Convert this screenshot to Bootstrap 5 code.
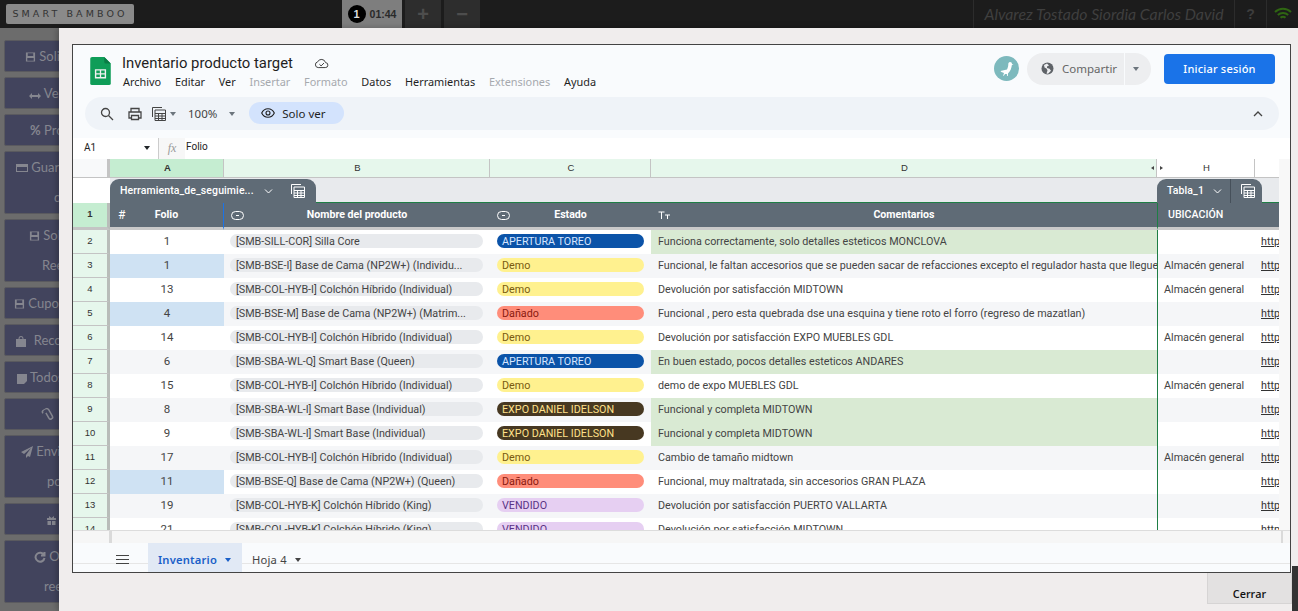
<!DOCTYPE html>
<html lang="es">
<head>
<meta charset="UTF-8">
<meta name="viewport" content="width=device-width, initial-scale=1">
<title>Inventario producto target</title>
<link href="https://cdn.jsdelivr.net/npm/bootstrap@5.3.0/dist/css/bootstrap.min.css" rel="stylesheet">
<style>
  html, body { height: 100%; overflow: hidden; }
  body { background: #6c6c6c; font-family: Roboto, "Liberation Sans", sans-serif; }

  /* top bar */
  .top-bar { height: 28px; background: #1c1c1c; }
  .brand-box { width: 128px; height: 20px; margin: 4px 0 0 6px; background: #8a8a8a; border-radius: 2px; color: #333; font: 400 9.5px/20px "DejaVu Sans", sans-serif; letter-spacing: 3.1px; white-space: nowrap; }
  .timer-box { width: 60px; margin-left: 208px; background: #7e7e7e; font: 700 10.5px "Liberation Sans", sans-serif; color: #2a2a2a; }
  .timer-num { width: 18px; height: 18px; border-radius: 50%; background: #000; color: #ddd; font-size: 11px; }
  .tool-box { width: 36px; margin-left: 3px; background: #2d2d2d; color: #4d4d4d; font: 700 20px/28px "Liberation Sans", sans-serif; }
  .user-name { width: 262px; border-left: 1px solid #2c2c2c; border-right: 1px solid #2c2c2c; margin-left: auto; color: #3f3f3f; font: italic 15.8px/28px Lato, sans-serif; white-space: nowrap; }
  .help-box { width: 32px; border-right: 1px solid #2c2c2c; color: #3d3d3d; font: 700 14px/28px "Liberation Sans", sans-serif; }
  .wifi-box { width: 31px; }

  /* dimmed side menu behind the modal */
  .side-menu { width: 130px; padding: 12px 0 0 4px; }
  .side-btn { height: 32px; margin-bottom: 5px; background: #42445d; border: 1px solid #5a5a5f; border-radius: 2px; color: #85868f; font: 13px/30px Lato, sans-serif; white-space: nowrap; overflow: hidden; }
  .side-btn.tall { height: 63px; }
  .side-btn svg { fill: #85868f; vertical-align: -2px; }
  .side-btn svg.line-ic { fill: none; stroke: #85868f; }
  .side-btn p { margin: 0; line-height: 30px; }
  .ind-9 { padding-left: 9px; } .ind-10 { padding-left: 10px; } .ind-11 { padding-left: 11px; }
  .ind-12 { padding-left: 12px; } .ind-16 { padding-left: 16px; } .ind-13 { padding-left: 13px; }
  .ind-20 { padding-left: 20px; } .ind-24 { padding-left: 24px; } .ind-25 { padding-left: 25px; }
  .ind-26 { padding-left: 26px; } .ind-29 { padding-left: 29px; } .ind-38 { padding-left: 38px; }
  .ind-41 { padding-left: 41px; }

  /* modal over the page */
  .sheet-modal { position: absolute; left: 59px; top: 28px; right: 0; bottom: 0; background: #f0eded; box-shadow: -2px 0 6px rgba(0,0,0,.25); }
  .sheet-frame { margin: 16px 7px 0 13px; height: 529px; border: 1px solid #444; background: #f9fbfd; overflow: hidden; }
  .close-wrap { width: 85px; height: 31px; margin: 0 6px 0 auto; background: #e3e1e1; border: 1px solid #d6d4d4; border-top: 0; color: #111; font: 600 10.8px/42px "Open Sans", sans-serif; text-align: center; }
  .scroll-thumb { position: absolute; right: 0; bottom: 0; width: 6px; height: 45px; background: #333; }

  /* sheets header */
  .doc-head { height: 52px; padding-left: 17px; }
  .doc-logo { margin-top: 12px; }
  .doc-text { margin-left: 11px; }
  .doc-title { font: 400 14.85px/20px Roboto, "Noto Sans", sans-serif; color: #1f1f1f; margin-top: 8px; }
  .cloud-ic { margin-left: 21px; }
  .doc-menu { font: 10.9px/16px "Noto Sans", Roboto, sans-serif; color: #1f1f1f; gap: 13.75px; margin-top: 1px; padding-left: 1px; }
  .doc-menu .off { color: #a6a9ae; }
  .head-right { margin-top: -5px; }
  .share-pill { width: 124px; height: 32px; background: #edeef0; border-radius: 16px; color: #666; font: 11.5px "Noto Sans", sans-serif; }
  .share-main { width: 98px; height: 32px; border-right: 1px solid #f9fbfd; padding-left: 14px; gap: 8px; }
  .login-btn { width: 111px; height: 30px; margin: 0 15px 0 13px; background: #1a73e8; border-radius: 4px; color: #fff; font: 500 11px/30px "Noto Sans", sans-serif; letter-spacing: .2px; text-align: center; }
  .goose { width: 25px; height: 25px; border-radius: 50%; background: #7db9bd; margin-right: 8px; }
  .tool-pill { height: 33px; margin: 0 11px 0 12px; background: #eff3f8; border-radius: 17px; padding-left: 15px; color: #333; }
  .print-ic { margin-left: 14px; }
  .calc-ic { margin-left: 10px; }
  .zoom-val { font: 11.5px "Noto Sans", sans-serif; color: #444; margin-left: 12px; }
  .zoom-tri { margin-left: 12px; }
  .view-pill { width: 95px; height: 22px; margin: 0 0 1px 14px; background: #d3e3fd; border-radius: 11px; color: #1f1f1f; font: 11.5px "Noto Sans", sans-serif; gap: 7px; padding-left: 12px; }
  .formula-bar { height: 21px; margin-top: 8px; background: #fff; font: 10px/18px Roboto, sans-serif; color: #222; }
  .name-box { width: 85px; height: 19px; padding-left: 11px; }
  .fx-box { width: 27px; height: 21px; background: #f7f7f7; color: #999; font: italic 12px/21px "Liberation Serif", serif; text-align: center; border-left: 1px solid #ccc; }
  .formula-val { padding-left: 1px; }

  /* grid */
  .sheet-grid { display: grid; grid-template-columns: 37px 114px 266px 161px 506px 98px 24px; width: 1206px; height: 371px; overflow: hidden; font-size: 10.75px; color: #444; align-content: start; }
  .col-head { height: 19px; padding-left: 2px; border-bottom: 1px solid #c4c4c4; border-right: 1px solid #c4c4c4; background: #e6f7ec; text-align: center; font: 9.5px/18px "Liberation Sans", sans-serif; color: #333; position: relative; }
  .col-head.corner { background: #f8f9fa; border-right: 3px solid #c4c4c4; }
  .col-head.active { background: #c5edd1; font-weight: 700; }
  .col-head.plain { background: #fff; }
  .mark-l, .mark-r { position: absolute; top: 7px; width: 0; height: 0; border-top: 2.5px solid transparent; border-bottom: 2.5px solid transparent; }
  .mark-l { right: 2px; border-right: 3px solid #444; }
  .mark-r { left: 3px; border-left: 3px solid #444; }
  .table-strip { height: 25px; padding-top: 1px; background: #e8eaed; border-bottom: 1px solid #1e7e45; }
  .table-strip.blank { background: #fff; border-bottom: 0; }
  .strip-main { grid-column: 2 / span 4; }
  .strip-end { grid-column: 6 / span 2; }
  .table-tab { height: 24px; background: #5f6b76; color: #fff; border-radius: 9px 9px 0 0; font: 500 10.5px/24px Roboto, sans-serif; letter-spacing: .1px; }
  .tab-wide { width: 206px; padding-left: 10px; }
  .tab-narrow { width: 105px; padding-left: 10px; }
  .chev-wide { margin-left: 10px; }
  .calc-wide { margin-left: 18px; }
  .chev-narrow { margin-left: 9px; }
  .tab-split { height: 24px; margin-left: 8px; padding-left: 10px; border-left: 1px solid #46505a; }
  .row-num { background: #e6f7ec; border-right: 3px solid #b8bdb9; border-bottom: 1px solid #c4c4c4; text-align: center; font: 9.5px/22px "Liberation Sans", sans-serif; color: #333; height: 24px; }
  .row-num.active { background: #c5edd1; font-weight: 700; height: 27px; border-bottom: 3px solid #c4c4c4; }
  .head-cell { height: 27px; background: #5f6b76; color: #fff; border-bottom: 3px solid #c9c9c9; font: 700 10.6px/24px Roboto, sans-serif; text-align: center; position: relative; }
  .head-cell svg { position: absolute; left: 7px; top: 8px; }
  .head-cell.left { text-align: left; padding-left: 10px; font-weight: 500; border-left: 1px solid #1e7e45; }
  .head-cell.sel { border-right: 1px solid #1a73e8; }
  .hash { position: absolute; left: 8px; font-weight: 400; font-size: 12px; }
  .data-cell { height: 24px; line-height: 24px; padding: 0 7px; white-space: nowrap; overflow: hidden; background: #fff; }
  .stripe { background: #f5f6f8; }
  .center { text-align: center; font-size: 11.5px; line-height: 22px; }
  .blue { background: #cfe2f3; }
  .green { background: #d9ead3; }
  .loc { border-left: 1px solid #1e7e45; padding-left: 6px; }
  .chip { display: block; height: 14px; margin-top: 4px; border-radius: 7px; line-height: 15px; padding: 0 5px; overflow: hidden; white-space: nowrap; }
  .chip-name { background: #e8eaed; margin-left: -1px; padding-left: 6px; color: #444; }
  .st-open { background: #0b53a8; color: #d6e6ff; }
  .st-demo { background: #fff18f; color: #7a5a10; }
  .st-bad { background: #ff8d7a; color: #8a1a10; }
  .st-exp { background: #473821; color: #ffe08a; }
  .st-sold { background: #e6cff2; color: #5a3286; }
  .http-link { color: #333; text-decoration: underline; padding: 0 0 0 6px; }
  .grid-wrap { height: 371px; overflow: hidden; background: #f9fbfd; }
  .side-gutter { flex: 1; background: #f8f8f8; }
  .h-scroll { height: 13px; background: #f6f6f6; border-top: 1px solid #dcdcdc; }
  .scroll-stub { width: 3px; height: 12px; margin-left: 36px; background: #dadada; }
  .scroll-stub.end { margin-left: 1169px; width: 2px; }
  .tab-bar { height: 29px; color: #444; font: 11.2px "Noto Sans", sans-serif; background: linear-gradient(#f9fbfd 20px, #e6e6e6 20px, #e6e6e6 21px, #f9fbfd 21px); }
  .menu-ic { margin: 3px 19px 0 43px; }
  .sheet-tab { height: 29px; padding: 4px 8px 0 10px; gap: 8px; letter-spacing: .2px; }
  .sheet-tab.current { width: 94px; background: #e1e9f5; color: #1a5fc8; font-weight: 600; }
  .tri { display: inline-block; width: 0; height: 0; border-left: 3.5px solid transparent; border-right: 3.5px solid transparent; border-top: 4px solid currentColor; }
</style>
</head>
<body>

<header class="top-bar d-flex">
  <div class="brand-box text-center">SMART BAMBOO</div>
  <div class="timer-box d-flex align-items-center justify-content-center gap-1"><span class="timer-num d-flex align-items-center justify-content-center">1</span>01:44</div>
  <div class="tool-box text-center">+</div>
  <div class="tool-box text-center">&minus;</div>
  <div class="user-name text-center">Alvarez Tostado Siordia Carlos David</div>
  <div class="help-box text-center">?</div>
  <div class="wifi-box d-flex align-items-center justify-content-center">
    <svg width="18" height="14" viewBox="0 0 18 14" fill="none" stroke="#2f6612" stroke-width="2"><path d="M1 5a11.500 11.500 0 0 1 16 0M3.800 8a7.500 7.500 0 0 1 10.400 0M6.500 10.800a3.600 3.600 0 0 1 5 0"/></svg>
  </div>
</header>

<nav class="side-menu">
  <div class="side-btn ind-20"><svg width="11" height="12" viewBox="0 0 12 12"><path d="M1 1h10v10H1zM3 2v3h6V2zM2.500 7v3h7V7z" fill-rule="evenodd"/></svg> Soli</div>
  <div class="side-btn ind-24"><svg width="12" height="8" viewBox="0 0 12 8"><path d="M0 4l3-3v2h6V1l3 3-3 3V5H3v2z"/></svg> Ver</div>
  <div class="side-btn ind-25"><b>%</b> Pro</div>
  <div class="side-btn tall ind-11"><p><svg width="12" height="12" viewBox="0 0 12 12"><path d="M0 2h12v8H0zM1 5v4h10V5z" fill-rule="evenodd"/></svg> Guard</p><p class="ind-38">d</p></div>
  <div class="side-btn tall ind-24"><p><svg width="11" height="12" viewBox="0 0 12 12"><path d="M1 1h10v10H1zM3 2v3h6V2zM2.500 7v3h7V7z" fill-rule="evenodd"/></svg> Soli</p><p class="ind-13">Ree</p></div>
  <div class="side-btn ind-9"><svg width="11" height="12" viewBox="0 0 12 12"><path d="M1 1h10v10H1zM3 2v3h6V2zM2.500 7v3h7V7z" fill-rule="evenodd"/></svg> Cupon</div>
  <div class="side-btn ind-10"><svg width="12" height="13" viewBox="0 0 12 13"><path d="M1 5h2.500a2.500 3 0 0 1 5 0H11v8H1zM4.500 5h3a1.500 2 0 0 0-3 0z" fill-rule="evenodd"/></svg> &nbsp;Recol</div>
  <div class="side-btn ind-12"><svg width="10" height="10" viewBox="0 0 10 10"><path d="M0 0h10v7L7 10H0z"/></svg> Todos</div>
  <div class="side-btn ind-38"><svg class="line-ic" width="10" height="13" viewBox="0 0 10 13" transform="rotate(-30)" stroke-width="1.500"><path d="M1 3a3 2.500 0 0 1 7 0v7a2 2 0 0 1-4 0V4"/></svg></div>
  <div class="side-btn tall ind-16"><p><svg width="12" height="12" viewBox="0 0 12 12"><path d="M12 0L0 6l3 2 7-6-5 7v3l2-2 2 1z"/></svg> Envi</p><p class="ind-26">por</p></div>
  <div class="side-btn ind-41"><svg width="11" height="11" viewBox="0 0 11 11"><path d="M1 3h9v2H1zM1.500 6h3.500v4H1.500zM6 6h3.500v4H6zM3 1l2.500 2L8 1v2H3z"/></svg></div>
  <div class="side-btn tall ind-29"><p><svg class="line-ic" width="12" height="12" viewBox="0 0 12 12" stroke-width="2"><path d="M10 4a4.500 4.500 0 1 0 .5 3M10.500 1v3.500H7"/></svg> Or</p><p class="ind-10">ree</p></div>
</nav>

<section class="sheet-modal">
  <div class="sheet-frame d-flex flex-column">
    <div class="doc-head d-flex">
      <svg class="doc-logo" width="21" height="28" viewBox="0 0 22 30"><path d="M2 0h13l7 7v21a2 2 0 0 1-2 2H2a2 2 0 0 1-2-2V2a2 2 0 0 1 2-2z" fill="#0f9d58"/><path d="M15 0l7 7h-5a2 2 0 0 1-2-2z" fill="#0a7c45"/><path d="M5 13h12v10H5zM6.500 14.500v2.800h3.800v-2.800zM11.700 14.500v2.800h3.800v-2.800zM6.500 18.700v2.800h3.800v-2.800zM11.700 18.700v2.800h3.800v-2.800z" fill="#f1f1f1" fill-rule="evenodd"/></svg>
      <div class="doc-text">
        <div class="doc-title d-flex align-items-center">Inventario producto target
          <svg class="cloud-ic" width="15" height="12" viewBox="0 0 18 14" fill="none" stroke="#444" stroke-width="1.200"><path d="M5 12.500a3.500 3.500 0 0 1-.6-6.900 5 5 0 0 1 9.400.9 3 3 0 0 1-.3 6zM6.500 8.500l2 2 3.500-3.500"/></svg>
        </div>
        <div class="doc-menu d-flex">
          <span>Archivo</span><span>Editar</span><span>Ver</span><span class="off">Insertar</span><span class="off">Formato</span><span>Datos</span><span>Herramientas</span><span class="off">Extensiones</span><span>Ayuda</span>
        </div>
      </div>
      <div class="ms-auto d-flex align-items-center head-right">
        <div class="goose d-flex align-items-center justify-content-center">
          <svg width="16" height="16" viewBox="0 0 16 16"><path d="M11 1c1.300 0 2 .8 2 2l1.500.6-1.600.5c-.3 2.500-1.400 6.400-3.900 8.400l-.2 2.500H8l-.1-2H6L5 14.500l-1 .5 1-3C3.500 11.500 2 11 1.500 10l6.500-1.500c1-2 1.300-4 1.300-5.500 0-1 .6-2 1.700-2z" fill="#fff"/></svg>
        </div>
        <div class="share-pill d-flex align-items-center">
          <div class="share-main d-flex align-items-center"><svg width="13" height="13" viewBox="0 0 13 13"><circle cx="6.500" cy="6.500" r="6" fill="#5f6368"/><path d="M6 1.500L3 3l.5 2.500 2 1 1 2L5.500 11.500l1.500.2 3-3-1.500-2L6 6V4.500L8 3.500z" fill="#edeef0"/></svg>Compartir</div>
          <span class="tri ms-2 text-secondary"></span>
        </div>
        <div class="login-btn">Iniciar sesión</div>
      </div>
    </div>
    <div class="tool-pill d-flex align-items-center">
      <svg width="14" height="14" viewBox="0 0 14 14" fill="none" stroke="#444" stroke-width="1.300"><circle cx="5.500" cy="5.500" r="4"/><path d="M8.500 8.500l4.500 4.500"/></svg>
      <svg class="print-ic" width="14" height="14" viewBox="0 0 14 14" fill="none" stroke="#444" stroke-width="1.300"><path d="M3 5V1.500h8V5M3 11H1V5h12v6h-2M3.500 8.500h7v4h-7z"/></svg>
      <svg class="calc-ic" width="14" height="14" viewBox="0 0 14 14" fill="none" stroke="#444" stroke-width="1"><path d="M.5 10V.5h9.500M3 3h10.500v10.500H3zM3 6.500h10.500M3 9h10.500M3 11.500h10.500M6.500 6.500v7M10 6.500v7"/></svg>
      <span class="tri ms-1 text-secondary"></span>
      <span class="zoom-val">100%</span>
      <span class="tri zoom-tri text-secondary"></span>
      <div class="view-pill d-flex align-items-center">
        <svg width="14" height="10" viewBox="0 0 14 10" fill="none" stroke="#1f1f1f" stroke-width="1.100"><path d="M.7 5C2 2.200 4.300.7 7 .7S12 2.200 13.300 5C12 7.800 9.700 9.300 7 9.300S2 7.800.7 5z"/><circle cx="7" cy="5" r="2"/></svg>Solo ver
      </div>
      <svg class="ms-auto me-3" width="10" height="6" viewBox="0 0 10 6" fill="none" stroke="#444" stroke-width="1.300"><path d="M1 5l4-4 4 4"/></svg>
    </div>
    <div class="formula-bar d-flex">
      <div class="name-box d-flex align-items-center">A1<span class="tri ms-auto me-2 text-dark"></span></div>
      <div class="fx-box">fx</div>
      <div class="formula-val">Folio</div>
    </div>
    <div class="grid-wrap d-flex">
      <div class="sheet-grid">
        <div class="col-head corner"></div><div class="col-head active">A</div><div class="col-head">B</div><div class="col-head">C</div><div class="col-head">D<i class="mark-l"></i></div><div class="col-head plain"><i class="mark-r"></i>H</div><div class="col-head plain border-end-0"></div>

        <div class="table-strip blank"></div>
        <div class="table-strip strip-main"><div class="table-tab tab-wide d-flex align-items-center">Herramienta_de_seguimie...
          <svg class="chev-wide" width="9" height="5" viewBox="0 0 9 5" fill="none" stroke="#fff" stroke-width="1"><path d="M1 .5l3.500 3.500L8 .5"/></svg>
          <svg class="calc-wide" width="14" height="14" viewBox="0 0 14 14" fill="none" stroke="#fff" stroke-width="1"><path d="M.5 10V.5h9.500M3 3h10.500v10.500H3zM3 6.500h10.500M3 9h10.500M3 11.500h10.500M6.500 6.500v7M10 6.500v7"/></svg></div></div>
        <div class="table-strip strip-end"><div class="table-tab tab-narrow d-flex align-items-center">Tabla_1
          <svg class="chev-narrow" width="9" height="5" viewBox="0 0 9 5" fill="none" stroke="#fff" stroke-width="1"><path d="M1 .5l3.500 3.500L8 .5"/></svg>
          <span class="tab-split d-flex align-items-center"><svg width="14" height="14" viewBox="0 0 14 14" fill="none" stroke="#fff" stroke-width="1"><path d="M.5 10V.5h9.500M3 3h10.500v10.500H3zM3 6.500h10.500M3 9h10.500M3 11.500h10.500M6.500 6.500v7M10 6.500v7"/></svg></span></div></div>

        <div class="row-num active">1</div>
        <div class="head-cell sel"><span class="hash">#</span>Folio</div>
        <div class="head-cell"><svg width="13" height="9" viewBox="0 0 13 9" fill="none" stroke="#fff"><rect x=".5" y=".5" width="12" height="8" rx="4"/><path d="M5 4.500h3"/></svg>Nombre del producto</div>
        <div class="head-cell"><svg width="13" height="9" viewBox="0 0 13 9" fill="none" stroke="#fff"><rect x=".5" y=".5" width="12" height="8" rx="4"/><path d="M5 4.500h3"/></svg>Estado</div>
        <div class="head-cell"><svg width="13" height="9" viewBox="0 0 13 9" fill="none" stroke="#fff"><path d="M.5 1h6M3.500 1v7M7 4h5M9.500 4v4"/></svg>Comentarios</div>
        <div class="head-cell left">UBICACIÓN</div>
        <div class="head-cell"></div>

        <div class="row-num">2</div><div class="data-cell center">1</div><div class="data-cell"><span class="chip chip-name">[SMB-SILL-COR] Silla Core</span></div><div class="data-cell"><span class="chip st-open">APERTURA TOREO</span></div><div class="data-cell green">Funciona correctamente, solo detalles esteticos MONCLOVA</div><div class="data-cell loc"></div><div class="data-cell http-link">http</div>
        <div class="row-num">3</div><div class="data-cell center blue">1</div><div class="data-cell stripe"><span class="chip chip-name">[SMB-BSE-I] Base de Cama (NP2W+) (Individu...</span></div><div class="data-cell stripe"><span class="chip st-demo">Demo</span></div><div class="data-cell stripe">Funcional, le faltan accesorios que se pueden sacar de refacciones excepto el regulador hasta que llegue</div><div class="data-cell stripe loc">Almacén general</div><div class="data-cell stripe http-link">http</div>
        <div class="row-num">4</div><div class="data-cell center">13</div><div class="data-cell"><span class="chip chip-name">[SMB-COL-HYB-I] Colchón Híbrido (Individual)</span></div><div class="data-cell"><span class="chip st-demo">Demo</span></div><div class="data-cell">Devolución por satisfacción MIDTOWN</div><div class="data-cell loc">Almacén general</div><div class="data-cell http-link">http</div>
        <div class="row-num">5</div><div class="data-cell center blue">4</div><div class="data-cell stripe"><span class="chip chip-name">[SMB-BSE-M] Base de Cama (NP2W+) (Matrim...</span></div><div class="data-cell stripe"><span class="chip st-bad">Dañado</span></div><div class="data-cell stripe">Funcional , pero esta quebrada dse una esquina y tiene roto el forro (regreso de mazatlan)</div><div class="data-cell stripe loc"></div><div class="data-cell stripe http-link">http</div>
        <div class="row-num">6</div><div class="data-cell center">14</div><div class="data-cell"><span class="chip chip-name">[SMB-COL-HYB-I] Colchón Híbrido (Individual)</span></div><div class="data-cell"><span class="chip st-demo">Demo</span></div><div class="data-cell">Devolución por satisfacción EXPO MUEBLES GDL</div><div class="data-cell loc">Almacén general</div><div class="data-cell http-link">http</div>
        <div class="row-num">7</div><div class="data-cell center stripe">6</div><div class="data-cell stripe"><span class="chip chip-name">[SMB-SBA-WL-Q] Smart Base (Queen)</span></div><div class="data-cell stripe"><span class="chip st-open">APERTURA TOREO</span></div><div class="data-cell green">En buen estado, pocos detalles esteticos ANDARES</div><div class="data-cell stripe loc"></div><div class="data-cell stripe http-link">http</div>
        <div class="row-num">8</div><div class="data-cell center">15</div><div class="data-cell"><span class="chip chip-name">[SMB-COL-HYB-I] Colchón Híbrido (Individual)</span></div><div class="data-cell"><span class="chip st-demo">Demo</span></div><div class="data-cell">demo de expo MUEBLES GDL</div><div class="data-cell loc">Almacén general</div><div class="data-cell http-link">http</div>
        <div class="row-num">9</div><div class="data-cell center stripe">8</div><div class="data-cell stripe"><span class="chip chip-name">[SMB-SBA-WL-I] Smart Base (Individual)</span></div><div class="data-cell stripe"><span class="chip st-exp">EXPO DANIEL IDELSON</span></div><div class="data-cell green">Funcional y completa MIDTOWN</div><div class="data-cell stripe loc"></div><div class="data-cell stripe http-link">http</div>
        <div class="row-num">10</div><div class="data-cell center">9</div><div class="data-cell"><span class="chip chip-name">[SMB-SBA-WL-I] Smart Base (Individual)</span></div><div class="data-cell"><span class="chip st-exp">EXPO DANIEL IDELSON</span></div><div class="data-cell green">Funcional y completa MIDTOWN</div><div class="data-cell loc"></div><div class="data-cell http-link">http</div>
        <div class="row-num">11</div><div class="data-cell center stripe">17</div><div class="data-cell stripe"><span class="chip chip-name">[SMB-COL-HYB-I] Colchón Híbrido (Individual)</span></div><div class="data-cell stripe"><span class="chip st-demo">Demo</span></div><div class="data-cell stripe">Cambio de tamaño midtown</div><div class="data-cell stripe loc">Almacén general</div><div class="data-cell stripe http-link">http</div>
        <div class="row-num">12</div><div class="data-cell center blue">11</div><div class="data-cell"><span class="chip chip-name">[SMB-BSE-Q] Base de Cama (NP2W+) (Queen)</span></div><div class="data-cell"><span class="chip st-bad">Dañado</span></div><div class="data-cell">Funcional, muy maltratada, sin accesorios GRAN PLAZA</div><div class="data-cell loc"></div><div class="data-cell http-link">http</div>
        <div class="row-num">13</div><div class="data-cell center stripe">19</div><div class="data-cell stripe"><span class="chip chip-name">[SMB-COL-HYB-K] Colchón Híbrido (King)</span></div><div class="data-cell stripe"><span class="chip st-sold">VENDIDO</span></div><div class="data-cell stripe">Devolución por satisfacción PUERTO VALLARTA</div><div class="data-cell stripe loc"></div><div class="data-cell stripe http-link">http</div>
        <div class="row-num">14</div><div class="data-cell center">21</div><div class="data-cell"><span class="chip chip-name">[SMB-COL-HYB-K] Colchón Híbrido (King)</span></div><div class="data-cell"><span class="chip st-sold">VENDIDO</span></div><div class="data-cell">Devolución por satisfacción MIDTOWN</div><div class="data-cell loc"></div><div class="data-cell http-link">http</div>
      </div>
      <div class="side-gutter"></div>
    </div>
    <div class="h-scroll d-flex"><div class="scroll-stub"></div><div class="scroll-stub end"></div></div>
    <div class="tab-bar d-flex align-items-center">
      <svg class="menu-ic" width="13" height="9" viewBox="0 0 13 9" fill="none" stroke="#444"><path d="M0 .5h13M0 4.500h13M0 8.500h13"/></svg>
      <div class="sheet-tab current d-flex align-items-center">Inventario<span class="tri"></span></div>
      <div class="sheet-tab d-flex align-items-center">Hoja 4<span class="tri"></span></div>
    </div>
  </div>
  <div class="close-wrap">Cerrar</div>
</section>
<div class="scroll-thumb"></div>

<script src="https://cdn.jsdelivr.net/npm/bootstrap@5.3.0/dist/js/bootstrap.bundle.min.js"></script>
</body>
</html>
